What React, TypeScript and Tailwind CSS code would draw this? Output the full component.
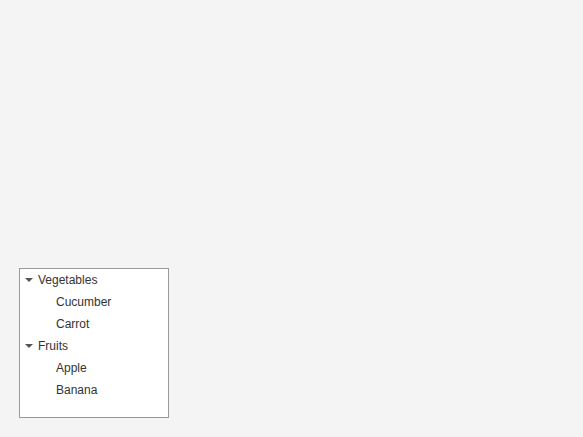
import React from "react";

const groups = [
  { label: "Vegetables", items: ["Cucumber", "Carrot"] },
  { label: "Fruits", items: ["Apple", "Banana"] },
];

export default function App() {
  return (
    <div className="min-h-[437px] bg-[#f4f4f4] pt-[268px] pl-[19px] font-['Liberation_Sans',Arial,sans-serif] text-[12px] text-[#333]">
      <div className="w-[150px] h-[150px] border border-[#999] bg-white">
        {groups.map((g) => (
          <div key={g.label}>
            <div className="flex items-center h-[22px]">
              <svg width="8" height="4" viewBox="0 0 8 4" className="ml-[5px] mr-[5px] fill-[#555]">
                <polygon points="0,0 8,0 4,4" />
              </svg>
              <span>{g.label}</span>
            </div>
            {g.items.map((item) => (
              <div key={item} className="flex items-center h-[22px] pl-[36px]">
                {item}
              </div>
            ))}
          </div>
        ))}
      </div>
    </div>
  );
}
